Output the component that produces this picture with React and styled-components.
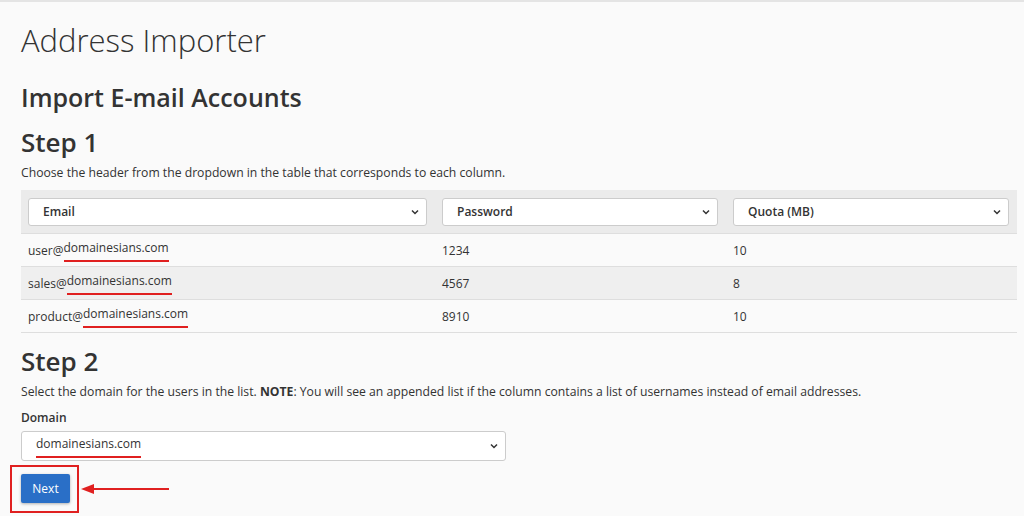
import styled, { createGlobalStyle } from 'styled-components'

const Global = createGlobalStyle`
  body { margin: 0; background: #fafafa; font-family: "Open Sans", sans-serif; color: #333; }
`

const Page = styled.div`
  border-top: 2px solid #e4e4e4;
  padding: 18px 7px 0 21px;
`
const Title = styled.h1`
  font-weight: 300; font-size: 31px; margin: 0 0 20px; line-height: 40px; color: #333;
`
const H2 = styled.h2`
  font-weight: 600; font-size: 25px; margin: 0 0 10px; line-height: 34px;
`
const Step = styled.h3`
  font-weight: 600; font-size: 26px; margin: ${p => (p.second ? '10px' : '0')} 0 4px; line-height: 36px;
`
const Text = styled.p`
  font-size: 12.2px; margin: 0 0 8px; line-height: 18px;
`
const Table = styled.div`
  display: grid;
  grid-template-columns: 414px 291px 1fr;
`
const Cell = styled.div`
  height: ${p => (p.head ? 43 : 32)}px;
  display: flex; align-items: center;
  padding: 0 8px 0 7px;
  font-size: 12px;
  background: ${p => (p.head ? '#ebebeb' : p.odd ? '#efefef' : '#fafafa')};
  border-bottom: 1px solid #dedede;
`
const Select = styled.div`
  flex: 1; height: 28px; box-sizing: border-box;
  background: #fff; border: 1px solid #ccc; border-radius: 3px;
  display: flex; align-items: center; justify-content: space-between;
  padding: 0 6px 0 14px; font-size: 12px; font-weight: ${p => (p.bold ? 600 : 400)};
  width: ${p => p.w || 'auto'};
`
const Mark = styled.span`
  border-bottom: 2px solid #e02020; padding-bottom: 4px;
`
const Label = styled.div`
  font-size: 12px; font-weight: 600; margin: 8px 0 5px;
`
const ButtonRow = styled.div`
  display: flex; align-items: center; margin: 4px 0 0 -11px;
`
const RedBox = styled.div`
  border: 2px solid #e02020; padding: 7px 7px 8px 9px;
`
const Button = styled.button`
  background: #2a6fc7; color: #fff; border: none; border-radius: 2px;
  font-family: inherit; font-size: 12px; padding: 0; width: 49px; height: 29px;
  box-shadow: 0 1px 3px rgba(0,0,0,.3);
`

const Chevron = () => (
  <svg width="10" height="10" viewBox="0 0 10 10"><path d="M2 3.5l3 3 3-3" fill="none" stroke="#333" strokeWidth="1.5" /></svg>
)

const rows = [
  ['user', '1234', '10'],
  ['sales', '4567', '8'],
  ['product', '8910', '10'],
]

export default function App() {
  return (
    <Page>
      <Global />
      <Title>Address Importer</Title>
      <H2>Import E-mail Accounts</H2>
      <Step>Step 1</Step>
      <Text>Choose the header from the dropdown in the table that corresponds to each column.</Text>
      <Table>
        {['Email', 'Password', 'Quota (MB)'].map(h => (
          <Cell head key={h}><Select bold>{h}<Chevron /></Select></Cell>
        ))}
        {rows.map(([u, p, q], i) => [
          <Cell key={u} odd={i === 1}>{u}@<Mark>domainesians.com</Mark></Cell>,
          <Cell key={u + p} odd={i === 1}>{p}</Cell>,
          <Cell key={u + q} odd={i === 1}>{q}</Cell>,
        ])}
      </Table>
      <Step second>Step 2</Step>
      <Text>Select the domain for the users in the list. <b>NOTE</b>: You will see an appended list if the column contains a list of usernames instead of email addresses.</Text>
      <Label>Domain</Label>
      <Select w="485px" style={{ height: 30 }}><Mark>domainesians.com</Mark><Chevron /></Select>
      <ButtonRow>
        <RedBox><Button>Next</Button></RedBox>
        <svg width="92" height="14" viewBox="0 0 92 14">
          <path d="M12 7H90" stroke="#e02020" strokeWidth="2" />
          <path d="M2 7l13-5v10z" fill="#e02020" />
        </svg>
      </ButtonRow>
    </Page>
  )
}
